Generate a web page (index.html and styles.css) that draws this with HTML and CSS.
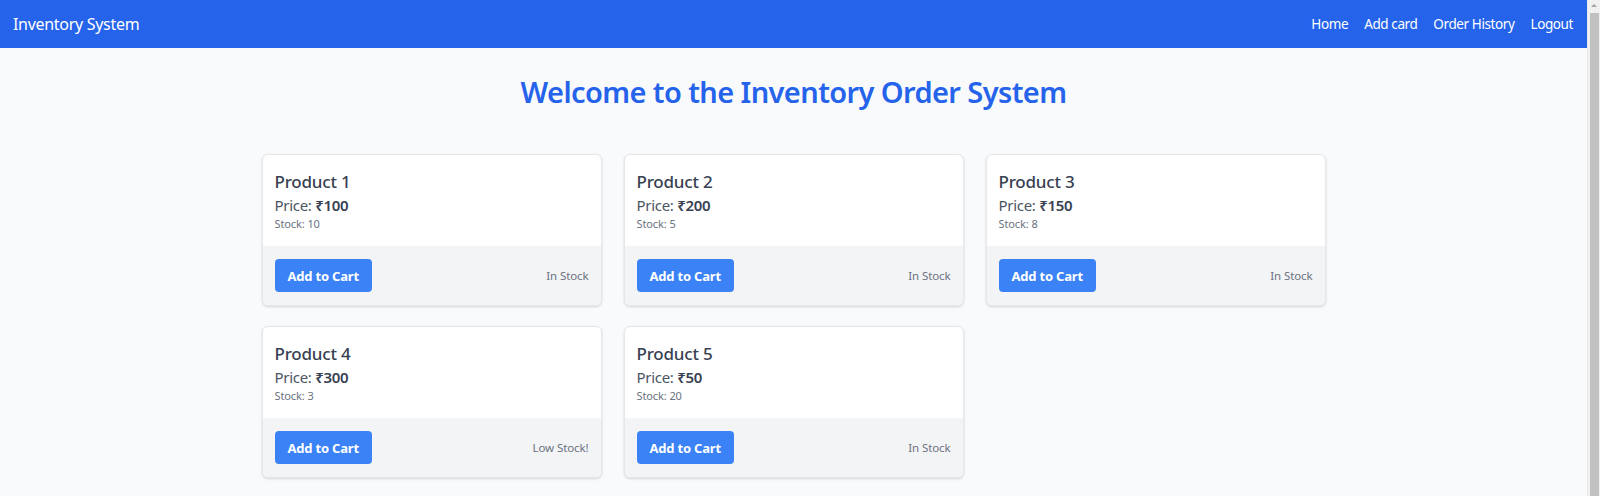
FILE: index.html
```html
<!DOCTYPE html>
<html lang="en">
<head>
<meta charset="utf-8">
<title>Inventory System</title>
<link rel="stylesheet" href="styles.css">
</head>
<body>
<div class="window">
  <div class="page">
    <nav class="navbar">
      <span class="brand">Inventory System</span>
      <div class="links">
        <a href="#">Home</a>
        <a href="#">Add card</a>
        <a href="#">Order History</a>
        <a href="#">Logout</a>
      </div>
    </nav>
    <main class="main">
      <h1 class="title">Welcome to the Inventory Order System</h1>
      <div class="grid">
        <div class="card">
          <div class="card-body">
            <div class="name">Product 1</div>
            <div class="price">Price: <strong>₹100</strong></div>
            <div class="stock">Stock: 10</div>
          </div>
          <div class="card-foot">
            <button class="btn">Add to Cart</button>
            <span class="status">In Stock</span>
          </div>
        </div>
        <div class="card">
          <div class="card-body">
            <div class="name">Product 2</div>
            <div class="price">Price: <strong>₹200</strong></div>
            <div class="stock">Stock: 5</div>
          </div>
          <div class="card-foot">
            <button class="btn">Add to Cart</button>
            <span class="status">In Stock</span>
          </div>
        </div>
        <div class="card">
          <div class="card-body">
            <div class="name">Product 3</div>
            <div class="price">Price: <strong>₹150</strong></div>
            <div class="stock">Stock: 8</div>
          </div>
          <div class="card-foot">
            <button class="btn">Add to Cart</button>
            <span class="status">In Stock</span>
          </div>
        </div>
        <div class="card">
          <div class="card-body">
            <div class="name">Product 4</div>
            <div class="price">Price: <strong>₹300</strong></div>
            <div class="stock">Stock: 3</div>
          </div>
          <div class="card-foot">
            <button class="btn">Add to Cart</button>
            <span class="status">Low Stock!</span>
          </div>
        </div>
        <div class="card">
          <div class="card-body">
            <div class="name">Product 5</div>
            <div class="price">Price: <strong>₹50</strong></div>
            <div class="stock">Stock: 20</div>
          </div>
          <div class="card-foot">
            <button class="btn">Add to Cart</button>
            <span class="status">In Stock</span>
          </div>
        </div>
      </div>
    </main>
  </div>
  <div class="scrollbar">
    <div class="sb-arrow"></div>
    <div class="sb-thumb"></div>
  </div>
</div>
</body>
</html>
```
FILE: styles.css
```css
* { box-sizing: border-box; }
html, body {
  margin: 0;
  padding: 0;
  height: 496px;
  overflow: hidden;
}
body {
  font-family: "Noto Sans", "Open Sans", "DejaVu Sans", sans-serif;
  background: #f9fafb;
  color: #374151;
}
.window {
  display: flex;
  height: 496px;
}
.page {
  flex: 1;
  min-width: 0;
  background: #f9fafb;
}
.navbar {
  height: 48px;
  background: #2563eb;
  display: flex;
  align-items: center;
  justify-content: space-between;
  padding: 0 14px 0 13px;
  color: #ffffff;
}
.brand {
  font-size: 16px;
  letter-spacing: -0.3px;
}
.links {
  display: flex;
  gap: 16px;
}
.links a {
  color: #ffffff;
  text-decoration: none;
  font-size: 13.5px;
  letter-spacing: -0.4px;
}
.main {
  padding-top: 26px;
}
.title {
  margin: 0 0 44px;
  text-align: center;
  font-size: 29px;
  line-height: 36px;
  font-weight: 600;
  color: #2563eb;
  letter-spacing: -0.6px;
}
.grid {
  display: grid;
  grid-template-columns: repeat(3, 340px);
  gap: 20px 22px;
  justify-content: center;
}
.card {
  background: #ffffff;
  border: 1px solid #e5e7eb;
  border-radius: 6px;
  box-shadow: 0 1px 3px rgba(0,0,0,0.1), 0 1px 2px rgba(0,0,0,0.05);
  overflow: hidden;
}
.card-body {
  padding: 15px 12px 14px;
}
.name {
  font-size: 17px;
  line-height: 24px;
  font-weight: 500;
  color: #374151;
  letter-spacing: -0.2px;
}
.price {
  font-size: 15px;
  line-height: 22px;
  color: #4b5563;
  letter-spacing: -0.3px;
}
.price strong {
  font-weight: 600;
  color: #374151;
}
.stock {
  font-size: 11px;
  line-height: 16px;
  color: #6b7280;
  letter-spacing: -0.1px;
}
.card-foot {
  background: #f3f4f6;
  padding: 13px 12px 13px;
  display: flex;
  align-items: center;
  justify-content: space-between;
}
.btn {
  height: 33px;
  padding: 0 13px;
  border: none;
  border-radius: 4px;
  background: #3b82f6;
  color: #ffffff;
  font-family: inherit;
  font-size: 13px;
  font-weight: 700;
  letter-spacing: -0.2px;
}
.status {
  font-size: 11.5px;
  color: #6b7280;
  letter-spacing: -0.1px;
}
.scrollbar {
  width: 13px;
  background: #f1f1f1;
  display: flex;
  flex-direction: column;
  align-items: center;
  border-left: 1px solid #e8e8e8;
}
.sb-arrow {
  margin-top: 4px;
  width: 0;
  height: 0;
  border-left: 3px solid transparent;
  border-right: 3px solid transparent;
  border-bottom: 3px solid #a3a3a3;
}
.sb-thumb {
  margin-top: 6px;
  width: 9px;
  flex: 1;
  background: #c1c1c1;
}
```
